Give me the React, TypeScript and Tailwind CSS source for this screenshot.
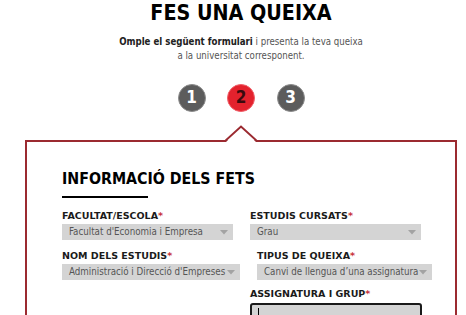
import React from "react";

const Arrow = () => (
  <svg width="8" height="5" viewBox="0 0 8 5" className="shrink-0">
    <polygon points="0,0 8,0 4,4.5" fill="#a3a3a3" />
  </svg>
);

const Label = ({ text, className = "" }: { text: string; className?: string }) => (
  <div
    className={
      "font-['DejaVu_Sans',sans-serif] text-[9.5px] leading-[12px] font-bold text-[#1a1a1a] whitespace-nowrap " +
      className
    }
  >
    {text}
    <span className="text-[#c8323a]">*</span>
  </div>
);

const Select = ({ value, className = "" }: { value: string; className?: string }) => (
  <div
    className={
      "h-[16px] bg-[#d4d4d4] flex items-center justify-between pl-[7px] pr-[5px] text-[9.7px] text-[#555] whitespace-nowrap overflow-hidden " +
      className
    }
  >
    <span>{value}</span>
    <Arrow />
  </div>
);

export default function App() {
  return (
    <div className="w-[466px] h-[315px] overflow-hidden bg-white font-['DejaVu_Sans_Condensed','DejaVu_Sans',sans-serif]">
      <div className="pl-[25px] pr-[9px]">
        <h1 className="text-[21.3px] leading-[26px] font-bold text-center text-black">FES UNA QUEIXA</h1>
        <div className="mt-[8.5px] text-center text-[9.6px] leading-[14px] text-[#555]">
          <div>
            <span className="font-bold text-[#222]">Omple el següent formulari</span> i presenta la teva queixa
          </div>
          <div>a la universitat corresponent.</div>
        </div>
        <div className="mt-[21.5px] flex justify-center gap-[21.5px]">
          <div className="w-[28px] h-[28px] rounded-full bg-[#5c5c5c] border border-[#8d8d8d] flex items-center justify-center text-white font-bold text-[17px]">
            1
          </div>
          <div className="w-[28px] h-[28px] rounded-full bg-[#e3222d] border border-[#f0606a] flex items-center justify-center text-[#3a0a0d] font-bold text-[17px]">
            2
          </div>
          <div className="w-[28px] h-[28px] rounded-full bg-[#5c5c5c] border border-[#8d8d8d] flex items-center justify-center text-white font-bold text-[17px]">
            3
          </div>
        </div>
        <div className="relative mt-[28px] border-2 border-[#9b2a30] h-[400px] pl-[35px] pt-[28px]">
          <svg
            className="absolute left-1/2 -translate-x-1/2 top-[-17px]"
            width="32"
            height="19"
            viewBox="0 0 32 19"
          >
            <polygon points="1,17 16,2 31,17 31,19 1,19" fill="white" />
            <polyline points="0,16 16,1.5 32,16" fill="none" stroke="#9b2a30" strokeWidth="2" />
          </svg>
          <h2 className="text-[15.8px] leading-[18px] font-bold text-black">INFORMACIÓ DELS FETS</h2>
          <div className="mt-[8px] w-[86px] h-[2px] bg-black" />
          <div className="mt-[12px] flex">
            <div className="w-[188px] flex flex-col">
              <Label text="FACULTAT/ESCOLA" />
              <Select value="Facultat d'Economia i Empresa" className="mt-[2px] w-[171px]" />
              <Label text="NOM DELS ESTUDIS" className="mt-[9.5px]" />
              <Select value="Administració i Direcció d'Empreses" className="mt-[2.5px] w-[178px]" />
            </div>
            <div className="flex flex-col">
              <Label text="ESTUDIS CURSATS" />
              <Select value="Grau" className="mt-[2px] w-[171px]" />
              <Label text="TIPUS DE QUEIXA" className="mt-[9.5px] ml-[7px]" />
              <Select value="Canvi de llengua d’una assignatura" className="mt-[2.5px] ml-[7px] w-[175px]" />
              <Label text="ASSIGNATURA I GRUP" className="mt-[8px]" />
              <div className="mt-[2.5px] w-[172px] h-[22px] bg-[#d4d4d4] border-2 border-[#1a1a1a] rounded-[3px] pl-[6px] pt-[3px]">
                <div className="w-px h-[12px] bg-black" />
              </div>
            </div>
          </div>
        </div>
      </div>
    </div>
  );
}
